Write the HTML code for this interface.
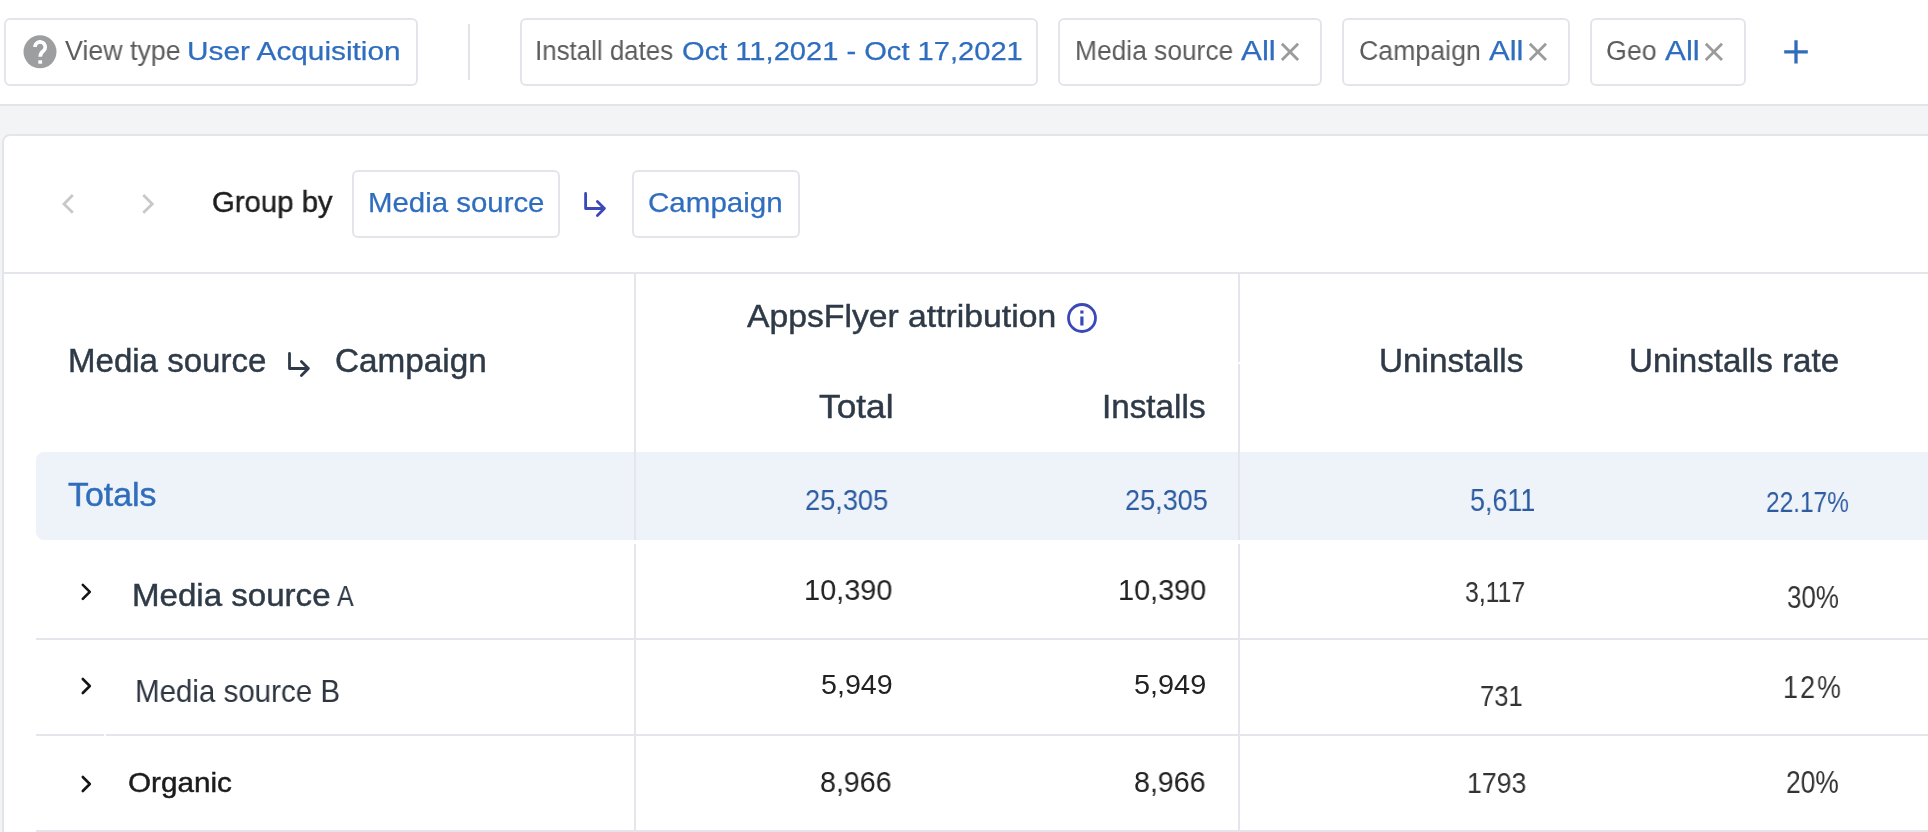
<!DOCTYPE html>
<html><head><meta charset="utf-8"><style>
html,body{margin:0;padding:0}
body{width:1928px;height:832px;overflow:hidden;position:relative;background:#fff;font-family:"Liberation Sans",sans-serif}
.a{position:absolute;box-sizing:border-box}
.box{position:absolute;box-sizing:border-box;border:2px solid #e3e5ea;border-radius:6px;background:#fff}
.t{position:absolute;white-space:pre;transform-origin:0 0;will-change:transform}
.hl{position:absolute;height:2px;background:#e4e6eb}
.vl{position:absolute;width:2px;background:#e4e6ec}
svg.ov{position:absolute;left:0;top:0}
</style></head><body>
<!-- top bar -->
<div class="a" style="left:0;top:104px;width:1928px;height:2px;background:#e2e4e9"></div>
<div class="a" style="left:0;top:106px;width:1928px;height:726px;background:#f3f4f6"></div>
<div class="box" style="left:4px;top:18px;width:414px;height:68px"></div>
<div class="a" style="left:468px;top:24px;width:2px;height:56px;background:#e1e3e8"></div>
<div class="box" style="left:520px;top:18px;width:518px;height:68px"></div>
<div class="box" style="left:1058px;top:18px;width:264px;height:68px"></div>
<div class="box" style="left:1342px;top:18px;width:228px;height:68px"></div>
<div class="box" style="left:1590px;top:18px;width:156px;height:68px"></div>
<!-- card -->
<div class="a" style="left:2px;top:134px;width:2000px;height:800px;border:2px solid #e3e5ea;border-top-left-radius:8px;background:#fff"></div>
<div class="box" style="left:352px;top:170px;width:208px;height:68px"></div>
<div class="box" style="left:632px;top:170px;width:168px;height:68px"></div>
<div class="hl" style="left:4px;top:272px;width:1924px"></div>
<!-- totals bg -->
<div class="a" style="left:36px;top:452px;width:1900px;height:88px;background:#eef2f9;border-radius:8px 0 0 8px"></div>
<!-- vertical lines -->
<div class="vl" style="left:634px;top:274px;height:266px"></div>
<div class="vl" style="left:634px;top:544px;height:290px"></div>
<div class="vl" style="left:1238px;top:274px;height:88px"></div>
<div class="vl" style="left:1238px;top:364px;height:176px"></div>
<div class="vl" style="left:1238px;top:544px;height:290px"></div>
<!-- row lines -->
<div class="hl" style="left:36px;top:638px;width:1892px"></div>
<div class="hl" style="left:36px;top:734px;width:68px"></div>
<div class="hl" style="left:106px;top:734px;width:1822px"></div>
<div class="hl" style="left:36px;top:830px;width:1892px"></div>
<svg class="ov" width="1928" height="832" viewBox="0 0 1928 832">
 <circle cx="40" cy="51.8" r="16.5" fill="#9d9ea0"/>
 <path d="M35 47 A5.1 5.1 0 1 1 43.6 50.7 Q40.2 53.1 40.2 56.8" fill="none" stroke="#fff" stroke-width="3.6"/>
 <rect x="38.3" y="60.3" width="3.8" height="3.4" fill="#fff"/>
 <g stroke="#9a9b9d" stroke-width="2.8" fill="none">
  <path d="M1281.9 43.7 L1298.1 59.9 M1298.1 43.7 L1281.9 59.9"/>
  <path d="M1529.8 43.7 L1546.0 59.9 M1546.0 43.7 L1529.8 59.9"/>
  <path d="M1705.8 43.7 L1722.0 59.9 M1722.0 43.7 L1705.8 59.9"/>
 </g>
 <path d="M1784.2 51.9 H1807.8 M1796 40.2 V63.5" stroke="#2f6cbd" stroke-width="3.3" fill="none"/>
 <path d="M72.8 195 L64 203.9 L72.8 212.8" stroke="#c8c8c8" stroke-width="2.8" fill="none"/>
 <path d="M143.3 195 L152.3 203.9 L143.3 212.8" stroke="#c8c8c8" stroke-width="2.8" fill="none"/>
 <path d="M585.6 193.5 V208.5 H604.4 M597.4 201.4 L604.4 208.5 L597.4 215.4" stroke="#3b48b8" stroke-width="2.8" fill="none" stroke-linecap="round" stroke-linejoin="round"/>
 <path d="M289.5 353.5 V368.5 H308.4 M301.4 361.4 L308.4 368.5 L301.4 375.4" stroke="#2e3a47" stroke-width="2.8" fill="none" stroke-linecap="round" stroke-linejoin="round"/>
 <circle cx="1082" cy="318" r="13.5" fill="none" stroke="#3b48b8" stroke-width="2.8"/>
 <rect x="1080.3" y="310.5" width="3.2" height="3.1" fill="#3b48b8"/>
 <rect x="1080.3" y="316.5" width="3.2" height="9" fill="#3b48b8"/>
 <g stroke="#151515" stroke-width="2.6" fill="none" stroke-linecap="round" stroke-linejoin="round">
  <path d="M82.8 584.8 L89.8 591.8 L82.8 598.8"/>
  <path d="M82.8 679 L89.8 686 L82.8 693"/>
  <path d="M82.8 777 L89.8 784 L82.8 791"/>
 </g>
</svg>
<div class="t" style="left:64.60px;top:37.80px;font-size:27.03px;line-height:27.03px;color:#5c5c5c;font-weight:400;transform:scaleX(0.9922)">View type</div>
<div class="t" style="left:187.06px;top:37.80px;font-size:26.67px;line-height:26.67px;color:#2f6dbf;font-weight:400;-webkit-text-stroke:0.25px currentColor;transform:scaleX(1.1176)">User Acquisition</div>
<div class="t" style="left:534.77px;top:38.00px;font-size:26.89px;line-height:26.89px;color:#5c5c5c;font-weight:400;transform:scaleX(0.9631)">Install dates</div>
<div class="t" style="left:681.50px;top:38.00px;font-size:26.53px;line-height:26.53px;color:#2f6dbf;font-weight:400;-webkit-text-stroke:0.25px currentColor;transform:scaleX(1.0974)">Oct 11,2021 - Oct 17,2021</div>
<div class="t" style="left:1074.56px;top:37.00px;font-size:27.18px;line-height:27.18px;color:#5c5c5c;font-weight:400;transform:scaleX(0.9700)">Media source</div>
<div class="t" style="left:1241.00px;top:38.00px;font-size:26.82px;line-height:26.82px;color:#2f6dbf;font-weight:400;-webkit-text-stroke:0.25px currentColor;transform:scaleX(1.1679)">All</div>
<div class="t" style="left:1358.62px;top:37.00px;font-size:27.18px;line-height:27.18px;color:#5c5c5c;font-weight:400;transform:scaleX(0.9835)">Campaign</div>
<div class="t" style="left:1488.70px;top:38.00px;font-size:26.82px;line-height:26.82px;color:#2f6dbf;font-weight:400;-webkit-text-stroke:0.25px currentColor;transform:scaleX(1.1536)">All</div>
<div class="t" style="left:1606.21px;top:37.00px;font-size:27.18px;line-height:27.18px;color:#5c5c5c;font-weight:400;transform:scaleX(0.9857)">Geo</div>
<div class="t" style="left:1664.80px;top:38.00px;font-size:26.82px;line-height:26.82px;color:#2f6dbf;font-weight:400;-webkit-text-stroke:0.25px currentColor;transform:scaleX(1.1679)">All</div>
<div class="t" style="left:212.41px;top:187.30px;font-size:29.58px;line-height:29.58px;color:#1d1d1d;font-weight:400;-webkit-text-stroke:0.45px currentColor;transform:scaleX(0.9917)">Group by</div>
<div class="t" style="left:367.84px;top:188.30px;font-size:28.56px;line-height:28.56px;color:#2f6dbf;font-weight:400;-webkit-text-stroke:0.25px currentColor;transform:scaleX(1.0298)">Media source</div>
<div class="t" style="left:648.36px;top:188.30px;font-size:28.56px;line-height:28.56px;color:#2f6dbf;font-weight:400;-webkit-text-stroke:0.25px currentColor;transform:scaleX(1.0352)">Campaign</div>
<div class="t" style="left:67.58px;top:345.00px;font-size:32.63px;line-height:32.63px;color:#2e3a47;font-weight:400;-webkit-text-stroke:0.45px currentColor;transform:scaleX(1.0124)">Media source</div>
<div class="t" style="left:334.98px;top:345.00px;font-size:32.63px;line-height:32.63px;color:#2e3a47;font-weight:400;-webkit-text-stroke:0.45px currentColor;transform:scaleX(1.0205)">Campaign</div>
<div class="t" style="left:746.70px;top:301.40px;font-size:31.90px;line-height:31.90px;color:#2e3a47;font-weight:400;-webkit-text-stroke:0.45px currentColor;transform:scaleX(1.0570)">AppsFlyer attribution</div>
<div class="t" style="left:819.00px;top:390.90px;font-size:32.34px;line-height:32.34px;color:#2e3a47;font-weight:400;-webkit-text-stroke:0.45px currentColor;transform:scaleX(1.0909)">Total</div>
<div class="t" style="left:1101.91px;top:390.90px;font-size:32.34px;line-height:32.34px;color:#2e3a47;font-weight:400;-webkit-text-stroke:0.45px currentColor;transform:scaleX(1.0289)">Installs</div>
<div class="t" style="left:1379.34px;top:345.40px;font-size:32.34px;line-height:32.34px;color:#2e3a47;font-weight:400;-webkit-text-stroke:0.45px currentColor;transform:scaleX(1.0299)">Uninstalls</div>
<div class="t" style="left:1629.15px;top:345.40px;font-size:32.34px;line-height:32.34px;color:#2e3a47;font-weight:400;-webkit-text-stroke:0.45px currentColor;transform:scaleX(1.0257)">Uninstalls rate</div>
<div class="t" style="left:68.10px;top:479.00px;font-size:32.63px;line-height:32.63px;color:#2f6dbd;font-weight:400;-webkit-text-stroke:0.45px currentColor;transform:scaleX(1.0369)">Totals</div>
<div class="t" style="left:804.66px;top:486.20px;font-size:29.07px;line-height:29.07px;color:#2c5ba0;font-weight:400;transform:scaleX(0.9356)">25,305</div>
<div class="t" style="left:1124.67px;top:486.20px;font-size:29.07px;line-height:29.07px;color:#2c5ba0;font-weight:400;transform:scaleX(0.9310)">25,305</div>
<div class="t" style="left:1469.85px;top:484.90px;font-size:31.54px;line-height:31.54px;color:#2c5ba0;font-weight:400;transform:scaleX(0.8541)">5,611</div>
<div class="t" style="left:1766.20px;top:485.60px;font-size:30.38px;line-height:30.38px;color:#2c5ba0;font-weight:400;transform:scaleX(0.8050)">22.17%</div>
<div class="t" style="left:131.83px;top:579.60px;font-size:31.90px;line-height:31.90px;color:#2e3a47;font-weight:400;-webkit-text-stroke:0.45px currentColor;transform:scaleX(1.0372)">Media source</div>
<div class="t" style="left:336.80px;top:580.60px;font-size:30.09px;line-height:30.09px;color:#2e3a47;font-weight:400;transform:scaleX(0.8300)">A</div>
<div class="t" style="left:804.01px;top:576.20px;font-size:29.07px;line-height:29.07px;color:#222222;font-weight:400;transform:scaleX(0.9942)">10,390</div>
<div class="t" style="left:1118.02px;top:576.20px;font-size:29.07px;line-height:29.07px;color:#222222;font-weight:400;transform:scaleX(0.9919)">10,390</div>
<div class="t" style="left:1464.85px;top:578.00px;font-size:29.07px;line-height:29.07px;color:#333333;font-weight:400;transform:scaleX(0.8515)">3,117</div>
<div class="t" style="left:1786.87px;top:581.50px;font-size:31.10px;line-height:31.10px;color:#333333;font-weight:400;transform:scaleX(0.8350)">30%</div>
<div class="t" style="left:134.82px;top:676.30px;font-size:31.40px;line-height:31.40px;color:#2d3540;font-weight:400;transform:scaleX(0.9400)">Media source B</div>
<div class="t" style="left:820.68px;top:669.90px;font-size:28.20px;line-height:28.20px;color:#222222;font-weight:400;transform:scaleX(1.0162)">5,949</div>
<div class="t" style="left:1134.18px;top:669.90px;font-size:28.20px;line-height:28.20px;color:#222222;font-weight:400;transform:scaleX(1.0235)">5,949</div>
<div class="t" style="left:1479.62px;top:682.20px;font-size:29.22px;line-height:29.22px;color:#333333;font-weight:400;transform:scaleX(0.8761)">731</div>
<div class="t" style="left:1782.66px;top:672.50px;font-size:30.81px;line-height:30.81px;color:#333333;letter-spacing:2.5px;font-weight:400;transform:scaleX(0.8687)">12%</div>
<div class="t" style="left:127.82px;top:768.60px;font-size:27.54px;line-height:27.54px;color:#1b1b1b;font-weight:400;-webkit-text-stroke:0.45px currentColor;transform:scaleX(1.0779)">Organic</div>
<div class="t" style="left:820.22px;top:767.80px;font-size:29.22px;line-height:29.22px;color:#222222;font-weight:400;transform:scaleX(0.9803)">8,966</div>
<div class="t" style="left:1134.22px;top:767.80px;font-size:29.22px;line-height:29.22px;color:#222222;font-weight:400;transform:scaleX(0.9803)">8,966</div>
<div class="t" style="left:1466.73px;top:768.10px;font-size:30.09px;line-height:30.09px;color:#333333;font-weight:400;transform:scaleX(0.8859)">1793</div>
<div class="t" style="left:1786.44px;top:767.00px;font-size:30.52px;line-height:30.52px;color:#333333;font-weight:400;transform:scaleX(0.8627)">20%</div>
</body></html>
